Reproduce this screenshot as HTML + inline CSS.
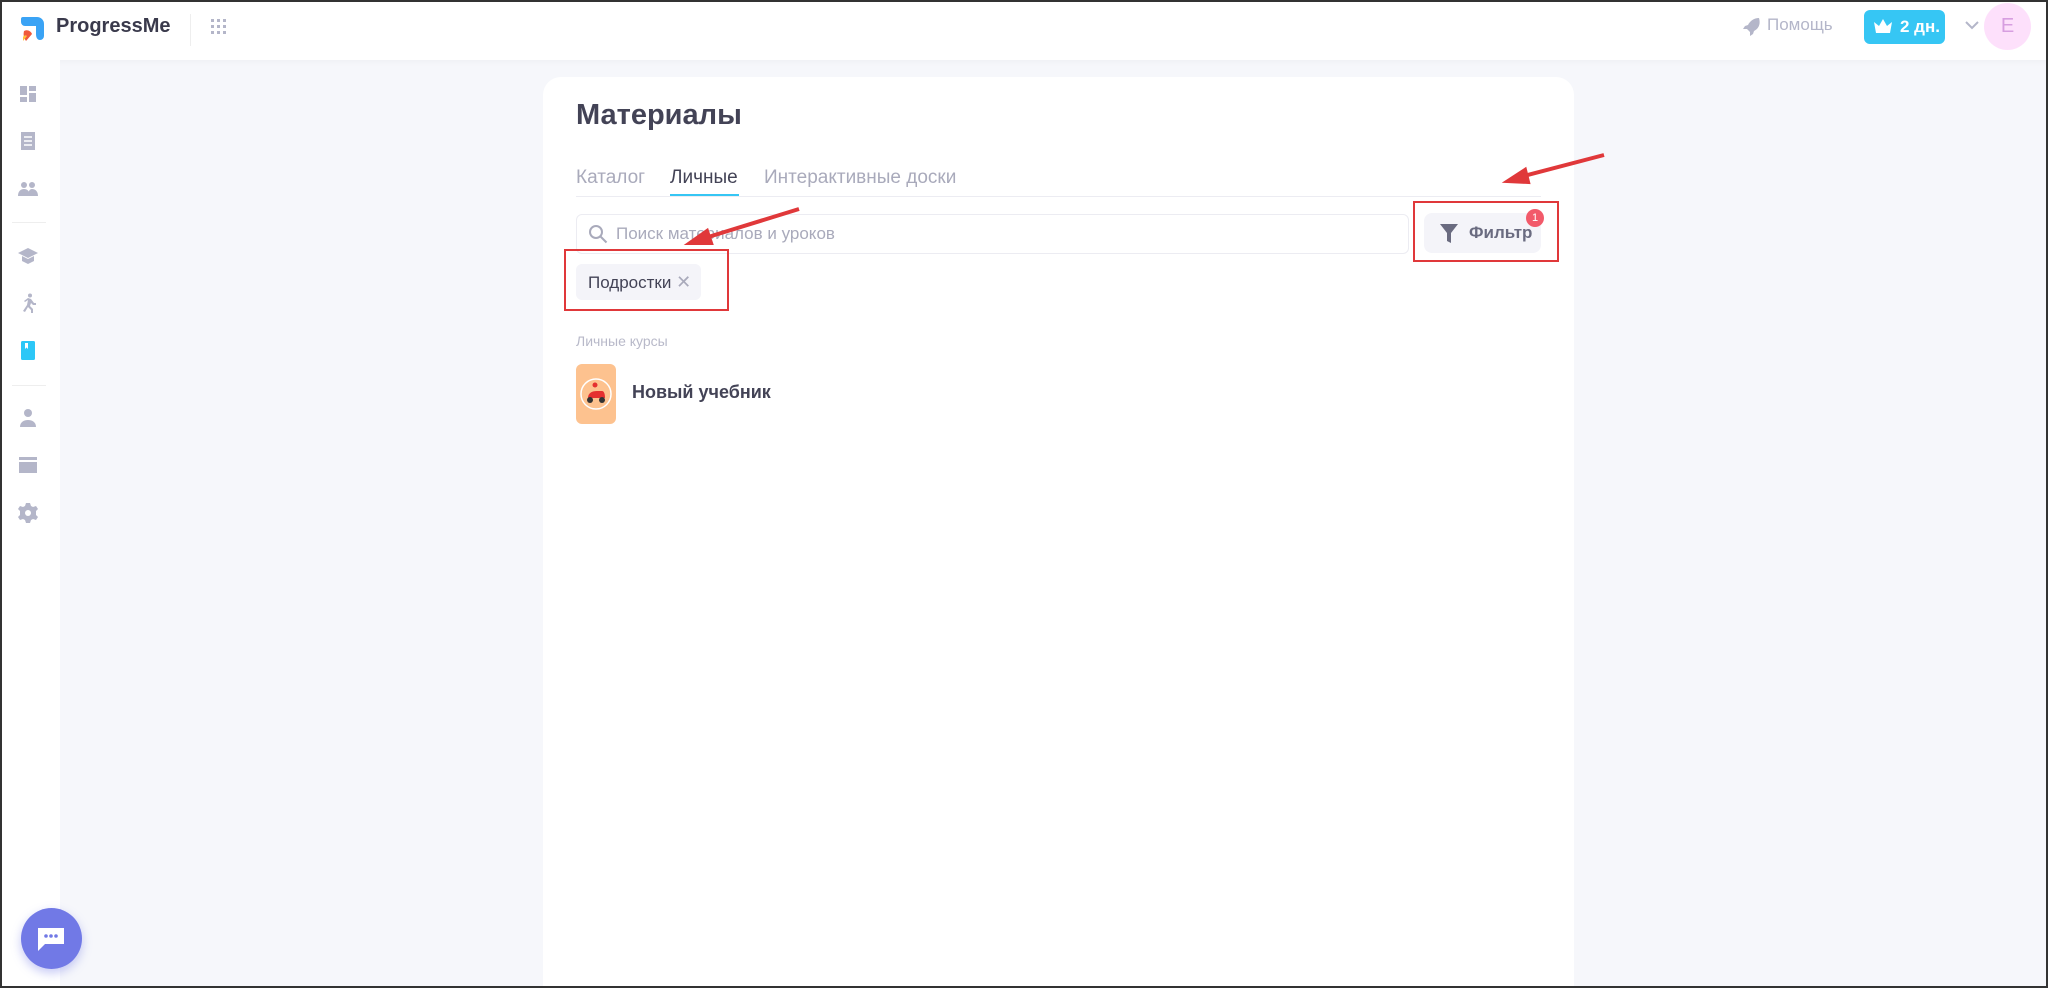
<!DOCTYPE html>
<html><head><meta charset="utf-8"><style>
*{box-sizing:border-box;margin:0;padding:0}
html,body{width:2048px;height:988px;overflow:hidden;background:#f6f7fb}
body{font-family:"Liberation Sans",sans-serif;color:#434356;position:relative}
.wrap{position:absolute;left:0;top:0;width:2048px;height:988px;overflow:hidden;background:#f6f7fb}
.frame{position:absolute;left:0;top:0;width:2048px;height:988px;border:2px solid #333;pointer-events:none}
.hdr{position:absolute;left:0;top:0;width:2048px;height:60px;background:#fff;box-shadow:0 2px 6px rgba(0,0,0,.03)}
.side{position:absolute;left:0;top:60px;width:60px;height:928px;background:#fff}
.ic{position:absolute;left:18px;width:20px;height:20px;fill:#b4b6c9}
.card{position:absolute;left:543px;top:77px;width:1031px;height:930px;background:#fff;border-radius:18px}
.abs{position:absolute}
</style></head><body><div class="wrap">
<div class="hdr">
 <svg class="abs" style="left:19px;top:15px" width="26" height="28" viewBox="0 0 26 28"><path d="M4 2h14a7 7 0 0 1 7 7v12a4 4 0 0 1-4 4c-3 0-4-3-4-6V11H6a4 4 0 0 1-4-4V4a2 2 0 0 1 2-2z" fill="#3aa3f5"/><path d="M5 16c3-2 7 0 8 3l-6 7c-2-3-3-6-2-10z" fill="#f05a3c"/><path d="M4 22c1-2 3-2 4-1l-4 5z" fill="#ffc23c"/></svg>
 <div class="abs" style="left:56px;top:15px;font-size:20px;font-weight:bold;color:#3a3a4c">ProgressMe</div>
 <div class="abs" style="left:190px;top:14px;width:1px;height:32px;background:#eee"></div>
 <svg class="abs" style="left:211px;top:19px" width="16" height="16"><g fill="#b4b6c9"><rect x="0" y="0" width="3" height="3"/><rect x="6" y="0" width="3" height="3"/><rect x="12" y="0" width="3" height="3"/><rect x="0" y="6" width="3" height="3"/><rect x="6" y="6" width="3" height="3"/><rect x="12" y="6" width="3" height="3"/><rect x="0" y="12" width="3" height="3"/><rect x="6" y="12" width="3" height="3"/><rect x="12" y="12" width="3" height="3"/></g></svg>
 <svg class="abs" style="left:1741px;top:16px" width="20" height="20" viewBox="0 0 20 20"><path d="M18 2c-5 0-9 3-11 7l-3 1 -2 3 4 0 3 3 0 4 3-2 1-3c4-2 7-6 5-13z" fill="#b4b6c9"/></svg>
 <div class="abs" style="left:1767px;top:15px;font-size:17px;color:#b4b6c9">Помощь</div>
 <div class="abs" style="left:1864px;top:10px;width:81px;height:34px;background:#36c6f4;border-radius:6px;color:#fff;font-weight:bold;font-size:17px;line-height:34px;padding-left:36px">2 дн.</div>
 <svg class="abs" style="left:1873px;top:18px" width="20" height="18" viewBox="0 0 20 18"><path d="M1 4l5 4 4-7 4 7 5-4-2 11H3z" fill="#fff"/></svg>
 <svg class="abs" style="left:1965px;top:20px" width="14" height="10"><path d="M1 2l6 6 6-6" stroke="#b4b6c9" stroke-width="2" fill="none"/></svg>
 <div class="abs" style="left:1984px;top:3px;width:47px;height:47px;border-radius:50%;background:#fde0fb;color:#d79ee0;font-size:20px;text-align:center;line-height:47px">E</div>
</div>
<div class="side">
 <svg class="ic" style="top:24px" viewBox="0 0 20 20"><path d="M2 2h7v9H2zM11 2h7v5h-7zM11 9h7v9h-7zM2 13h7v5H2z"/></svg>
 <svg class="ic" style="top:71px" viewBox="0 0 20 20"><path d="M3 1h14v18H3z"/><path d="M6 6h8M6 10h8M6 14h8" stroke="#fff" stroke-width="1.6"/></svg>
 <svg class="ic" style="top:119px" viewBox="0 0 20 20"><circle cx="6" cy="6" r="3"/><circle cx="14" cy="6" r="3"/><path d="M0 17c0-5 3-7 6-7s6 2 6 7zM10 17c0-5 2-7 4-7 3 0 6 2 6 7z"/></svg>
 <div class="abs" style="left:12px;top:162px;width:34px;height:1px;background:#eee"></div>
 <svg class="ic" style="top:186px" viewBox="0 0 20 20"><path d="M10 2L0 7l10 5 10-5zM4 10v5l6 3 6-3v-5l-6 3z"/></svg>
 <svg class="ic" style="top:233px" viewBox="0 0 20 20"><circle cx="12" cy="2.5" r="2"/><path d="M10 5l-4 3 1 1 3-2-1 5-4 6 2 1 3-5 3 3v5h2v-6l-3-3 1-3 2 2h3v-2h-2l-3-4z"/></svg>
 <svg class="ic" style="top:280px" viewBox="0 0 20 20"><rect x="3" y="1" width="14" height="19" rx="1.5" fill="#2cc7f7"/><path d="M7 3h3v6l-1.5-1.5L7 9z" fill="#fff"/></svg>
 <div class="abs" style="left:12px;top:325px;width:34px;height:1px;background:#eee"></div>
 <svg class="ic" style="top:348px" viewBox="0 0 20 20"><circle cx="10" cy="5" r="4"/><path d="M2 19c0-5 4-7 8-7s8 2 8 7z"/></svg>
 <svg class="ic" style="top:395px" viewBox="0 0 20 20"><rect x="1" y="2" width="18" height="3"/><rect x="1" y="7" width="18" height="11"/></svg>
 <svg class="ic" style="top:443px" viewBox="0 0 20 20"><path d="M8 0h4l1 3 2 1 3-1 2 3-2 2v4l2 2-2 3-3-1-2 1-1 3H8l-1-3-2-1-3 1-2-3 2-2V8L0 6l2-3 3 1 2-1z"/><circle cx="10" cy="10" r="3" fill="#fff"/></svg>
</div>
<div class="abs" style="left:21px;top:908px;width:61px;height:61px;border-radius:50%;background:#7179e6;box-shadow:0 4px 10px rgba(113,121,230,.4)"></div>
<svg class="abs" style="left:36px;top:924px" width="30" height="30" viewBox="0 0 30 30"><path d="M2 4h26v16H9l-7 7z" fill="#fff"/><circle cx="10" cy="12" r="1.8" fill="#7179e6"/><circle cx="15" cy="12" r="1.8" fill="#7179e6"/><circle cx="20" cy="12" r="1.8" fill="#7179e6"/></svg>

<div class="card">
 <div class="abs" style="left:33px;top:22px;font-size:29px;font-weight:bold;color:#434356">Материалы</div>
 <div class="abs" style="left:33px;top:90px;font-size:19px;color:#a9aabb">Каталог</div>
 <div class="abs" style="left:127px;top:90px;font-size:19px;color:#434356">Личные</div>
 <div class="abs" style="left:221px;top:90px;font-size:19px;color:#a9aabb">Интерактивные доски</div>
 <div class="abs" style="left:33px;top:119px;width:965px;height:1px;background:#ececf2"></div>
 <div class="abs" style="left:127px;top:117px;width:69px;height:2px;background:#36c6f4"></div>
 <div class="abs" style="left:33px;top:137px;width:833px;height:40px;border:1px solid #ececf2;border-radius:6px"></div>
 <svg class="abs" style="left:44px;top:146px" width="22" height="22" viewBox="0 0 22 22"><circle cx="9" cy="9" r="6" stroke="#a9aabb" stroke-width="2" fill="none"/><path d="M13.5 13.5l6 6" stroke="#a9aabb" stroke-width="2"/></svg>
 <div class="abs" style="left:73px;top:147px;font-size:17px;color:#a9aabb">Поиск материалов и уроков</div>
 <div class="abs" style="left:881px;top:136px;width:117px;height:40px;background:#f4f4f9;border-radius:8px;font-size:17px;font-weight:bold;color:#6a6b80;line-height:40px;padding-left:45px">Фильтр</div>
 <svg class="abs" style="left:897px;top:147px" width="18" height="20" viewBox="0 0 18 20"><path d="M0 0h18l-7 9v10l-4-2V9z" fill="#6a6b80"/></svg>
 <div class="abs" style="left:983px;top:132px;width:18px;height:18px;border-radius:50%;background:#f25a6a;color:#fff;font-size:11px;text-align:center;line-height:18px">1</div>
 <div class="abs" style="left:870px;top:124px;width:146px;height:61px;border:2px solid #e0383a"></div>
 <div class="abs" style="left:33px;top:187px;width:125px;height:36px;background:#f4f4f9;border-radius:6px;font-size:17px;color:#434356;line-height:36px;padding-left:12px">Подростки <span style="color:#a9aabb;font-size:18px">✕</span></div>
 <div class="abs" style="left:21px;top:172px;width:165px;height:62px;border:2px solid #e0383a"></div>
 <div class="abs" style="left:33px;top:256px;font-size:14px;color:#b8b9c9">Личные курсы</div>
 <div class="abs" style="left:33px;top:287px;width:40px;height:60px;background:#fdc28f;border-radius:6px"></div>
 <svg class="abs" style="left:33px;top:287px" width="40" height="60" viewBox="0 0 40 60"><circle cx="20" cy="30" r="15" fill="none" stroke="#fff" stroke-width="1.5"/><path d="M12 34c0-5 4-7 9-7h5c2 0 3 3 3 7z" fill="#e53030"/><circle cx="14" cy="36" r="3" fill="#333"/><circle cx="26" cy="36" r="3" fill="#333"/><circle cx="19" cy="21" r="2.5" fill="#e53030"/></svg>
 <div class="abs" style="left:89px;top:305px;font-size:18px;font-weight:bold;color:#434356">Новый учебник</div>
</div>
<svg class="abs" style="left:0;top:0" width="2048" height="988">
 <g stroke="#e0383a" stroke-width="4" fill="#e0383a">
 <line x1="799" y1="209" x2="705" y2="238"/><path d="M690 243l17-12 4 12z"/>
 <line x1="1604" y1="155" x2="1524" y2="176"/><path d="M1508 181l17-11 3 12z"/>
 </g>
</svg>
<div class="frame"></div>
</div></body></html>
